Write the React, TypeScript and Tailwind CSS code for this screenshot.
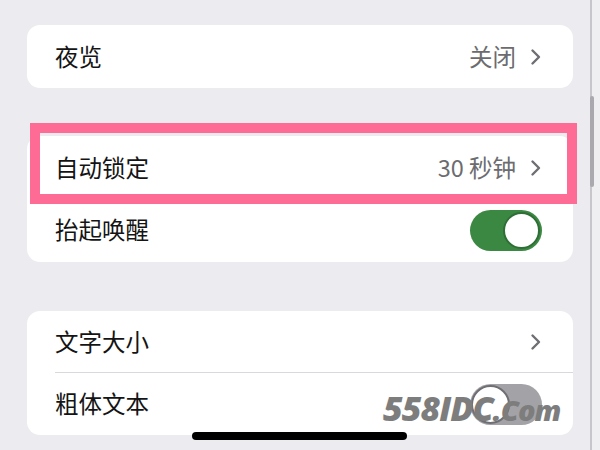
import React from 'react';

const font = { fontFamily: '"Noto Sans CJK SC", "Noto Sans", sans-serif' };

function Chevron() {
  return (
    <svg width="12" height="18" viewBox="0 0 12 18" fill="none" className="shrink-0">
      <path d="M2.5 2.5l6.5 6.5-6.5 6.5" stroke="#6e6e73" strokeWidth="2.4" strokeLinecap="round" strokeLinejoin="round" />
    </svg>
  );
}

function Toggle({ on }: { on: boolean }) {
  if (on) {
    return (
      <div className="w-[72px] h-[41px] rounded-full bg-[#3b8843] flex items-center justify-end pr-[2px] shrink-0">
        <div className="w-[37px] h-[37px] rounded-full bg-white border-2 border-[#2f6e36]" />
      </div>
    );
  }
  return (
    <div className="w-[72px] h-[41px] rounded-full bg-[#a3a3a7] flex items-center pl-[1px] shrink-0">
      <div className="w-[39px] h-[39px] rounded-full bg-white border-2 border-[#6f6f73]" />
    </div>
  );
}

function Row({
  label,
  value,
  chevron,
  toggle,
  divider
}: {
  label: string;
  value?: string;
  chevron?: boolean;
  toggle?: boolean | null;
  divider?: boolean;
}) {
  return (
    <div className="relative h-[62px] flex items-center pl-[28px] pr-[31px]">
      <span className="flex-1 text-[23.5px] text-[#141414] leading-none">{label}</span>
      {value && <span className="text-[23.5px] text-[#6c6c70] leading-none mr-[14px]">{value}</span>}
      {chevron && <Chevron />}
      {toggle !== undefined && toggle !== null && <Toggle on={toggle} />}
      {divider && <div className="absolute left-[28px] right-0 bottom-0 h-px bg-[#d9d9dd]" />}
    </div>
  );
}

export default function App() {
  return (
    <div className="relative w-[600px] h-[450px] overflow-hidden bg-[#efeff2] flex" style={font}>
      <div className="w-[590px] h-full bg-[#ebebf0] pl-[27px] pr-[17px] pt-[25px] flex flex-col">
        <div className="bg-white rounded-[13px] h-[63px] flex flex-col justify-center">
          <Row label="夜览" value="关闭" chevron />
        </div>

        <div className="bg-white rounded-[13px] mt-[48px] flex flex-col py-px">
          <Row label="自动锁定" value="30 秒钟" chevron />
          <Row label="抬起唤醒" toggle={true} />
        </div>

        <div className="bg-white rounded-[13px] mt-[49px] flex flex-col">
          <Row label="文字大小" chevron divider />
          <Row label="粗体文本" toggle={false} />
        </div>
      </div>
      <div className="w-[2px] h-full bg-[#c6c6cb]" />

      {/* scroll indicator */}
      <div className="absolute left-[590px] top-[96px] w-[4px] h-[91px] rounded-full bg-[#a9a9ae]" />

      {/* highlight annotation */}
      <div className="absolute left-[30px] top-[123px] w-[547px] h-[81px] border-[10px] border-[#fe6b95]" />

      {/* watermark */}
      <div
        className="absolute left-[383px] top-[391px] text-[#7d7d7d] italic font-black leading-none tracking-[-1px]"
        style={{ fontFamily: '"Open Sans", "DejaVu Sans", sans-serif' }}
      >
        <span className="text-[34px]">558IDC</span>
        <span className="text-[29px]">.Com</span>
      </div>

      {/* home indicator */}
      <div className="absolute left-[192px] top-[432px] w-[215px] h-[8px] rounded-full bg-black" />
    </div>
  );
}
